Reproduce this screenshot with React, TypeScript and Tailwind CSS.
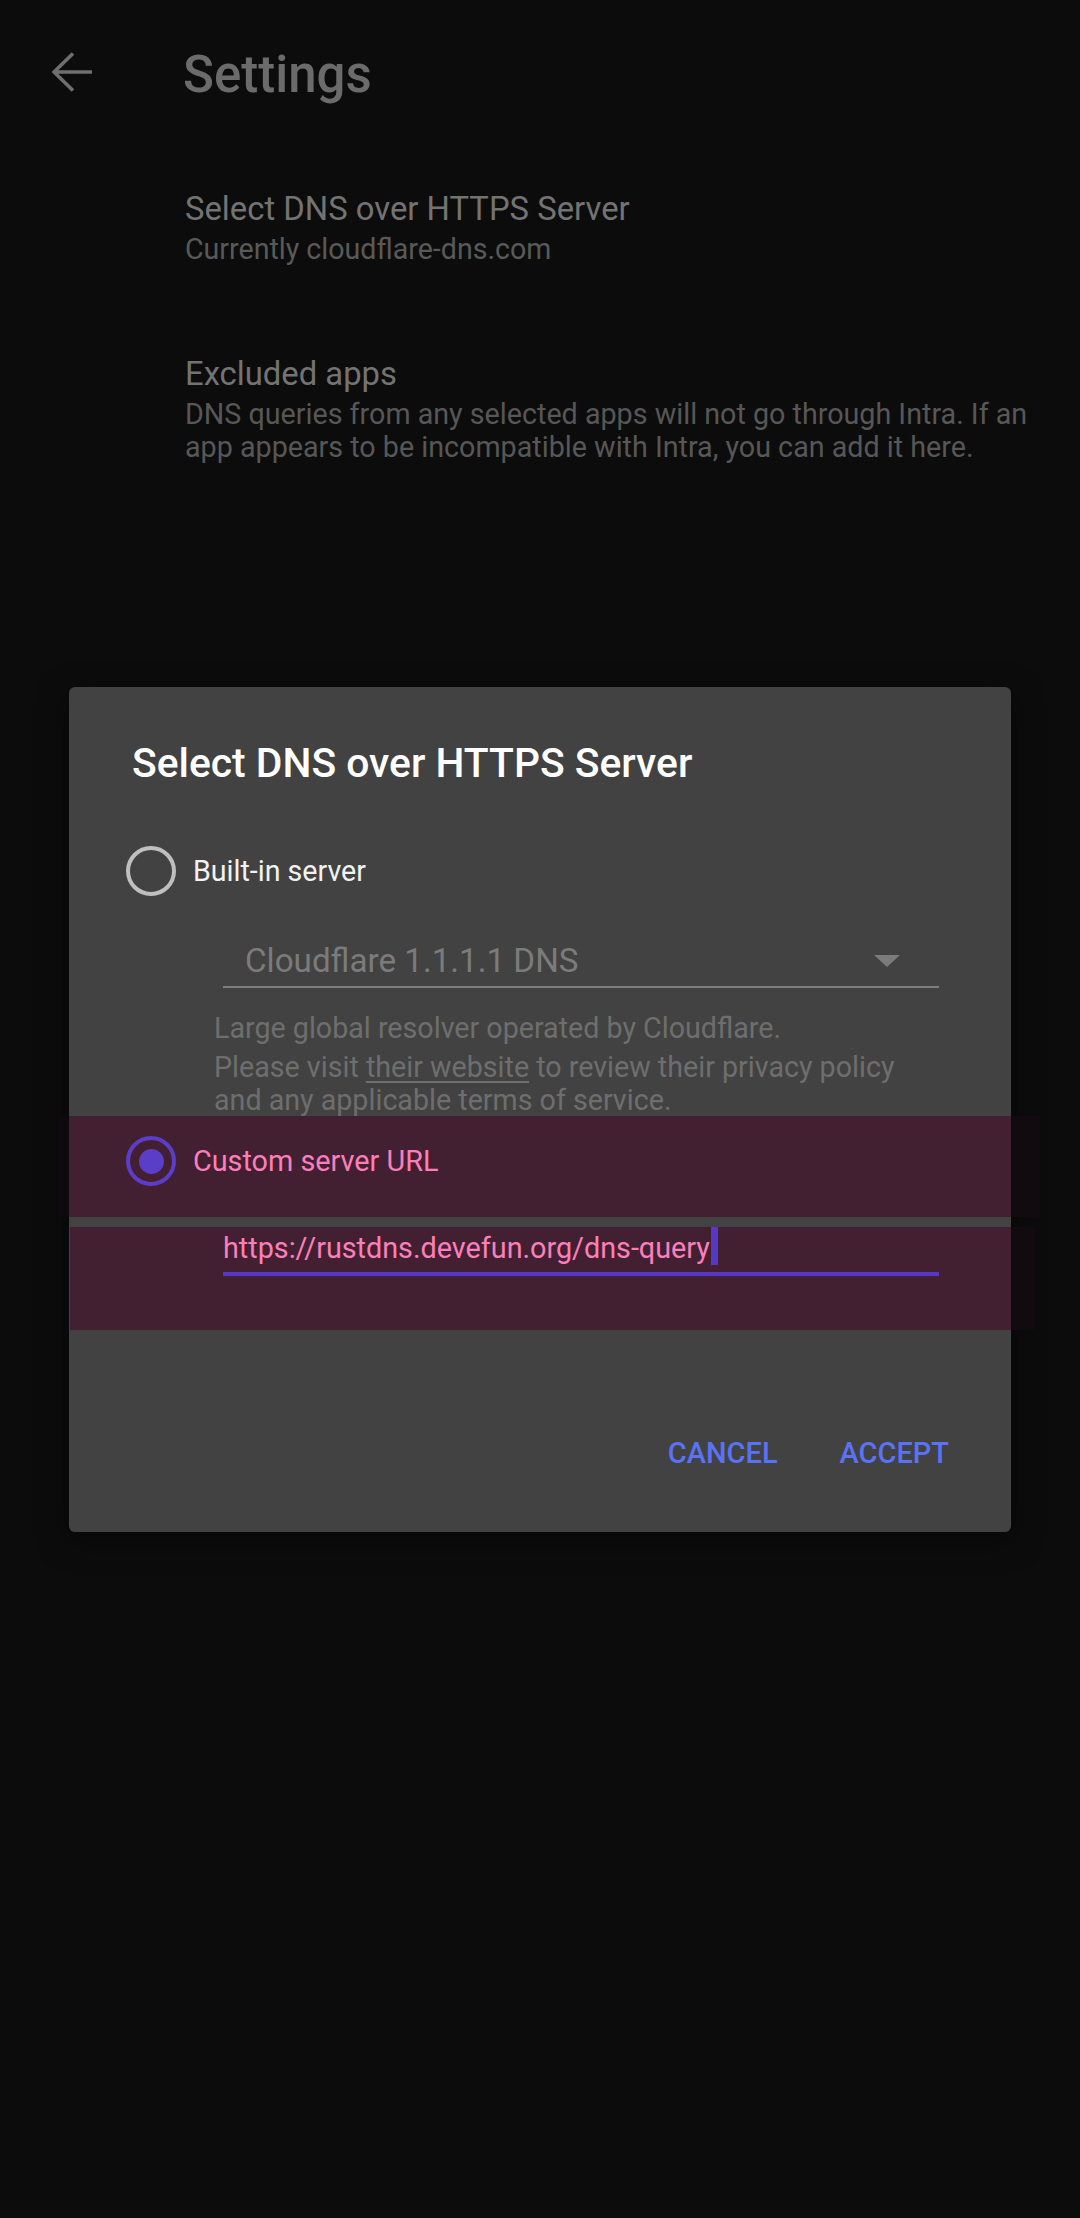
import React from "react";

function BackArrow() {
  return (
    <svg width="41" height="40" viewBox="0 0 41 40" fill="none">
      <path
        d="M2 20H40M21 1.5L2 20L21 38.5"
        stroke="#6f6f6f"
        strokeWidth="3.6"
        strokeLinejoin="miter"
      />
    </svg>
  );
}

function Radio({ checked }: { checked?: boolean }) {
  if (checked) {
    return (
      <div className="flex h-[50px] w-[50px] shrink-0 items-center justify-center rounded-full border-[4px] border-[#5a3ec8]">
        <div className="h-[25px] w-[25px] rounded-full bg-[#5a3ec8]" />
      </div>
    );
  }
  return (
    <div className="h-[50px] w-[50px] shrink-0 rounded-full border-[4px] border-[#bfbfbf]" />
  );
}

export default function App() {
  return (
    <div className="relative h-[2218px] w-[1080px] overflow-hidden bg-[#0c0c0c] font-['Roboto',sans-serif]">
      {/* toolbar (dimmed under the dialog) */}
      <header className="flex items-start pt-[45px]">
        <div className="ml-[52px] mt-[7px]">
          <BackArrow />
        </div>
        <h1 className="ml-[90px] text-[51px] font-medium leading-[60px] text-[#6b6b6b]">
          Settings
        </h1>
      </header>

      {/* settings list */}
      <div className="pl-[185px] pr-[30px]">
        <div className="mt-[84px]">
          <p className="text-[32.8px] leading-[40px] text-[#737373]">
            Select DNS over HTTPS Server
          </p>
          <p className="mt-[2px] text-[28.6px] leading-[36px] text-[#595959]">
            Currently cloudflare-dns.com
          </p>
        </div>
        <div className="mt-[87px]">
          <p className="text-[32.8px] leading-[40px] text-[#737373]">Excluded apps</p>
          <p className="mt-[4px] text-[28.7px] leading-[33px] text-[#575757]">
            <span className="block whitespace-nowrap">
              DNS queries from any selected apps will not go through Intra. If an
            </span>
            <span className="block whitespace-nowrap">
              app appears to be incompatible with Intra, you can add it here.
            </span>
          </p>
        </div>
      </div>

      {/* dialog */}
      <div className="absolute left-[69px] top-[687px] flex h-[845px] w-[942px] flex-col rounded-[6px] bg-[#424242] shadow-[0_8px_30px_rgba(0,0,0,0.5)]">
        {/* touch highlight bands */}
        <div className="absolute left-[-11px] top-[429px] z-[1] flex h-[101px] w-[982px]">
          <div className="w-[11px] bg-[#0e090c]" />
          <div className="w-[942px] bg-[#431f32]" />
          <div className="w-[29px] bg-[#110a0e]" />
        </div>
        <div className="absolute left-[1px] top-[540px] z-[1] flex h-[103px] w-[965px]">
          <div className="w-[941px] bg-[#431f32]" />
          <div className="w-[24px] bg-[#110a0e]" />
        </div>

        <h2 className="ml-[63px] mt-[52px] text-[40.8px] font-medium leading-[48px] text-white">
          Select DNS over HTTPS Server
        </h2>

        <div className="ml-[57px] mt-[59px] flex h-[50px] items-center">
          <Radio />
          <span className="ml-[17px] text-[28.6px] leading-[34px] text-[#f2f2f2]">
            Built-in server
          </span>
        </div>

        <div className="ml-[154px] mt-[45px] flex w-[716px] items-center border-b-2 border-[#7d7d7d] pb-[5px]">
          <span className="pl-[22px] text-[33.2px] leading-[40px] text-[#7b7b7b]">
            Cloudflare 1.1.1.1 DNS
          </span>
          <span className="ml-auto mr-[39px] h-0 w-0 border-l-[13px] border-r-[13px] border-t-[12px] border-l-transparent border-r-transparent border-t-[#7b7b7b]" />
        </div>

        <div className="ml-[145px] mt-[24px] text-[28.65px] leading-[33px] text-[#6e6e6e]">
          <p className="whitespace-nowrap">Large global resolver operated by Cloudflare.</p>
          <p className="mt-[6px]">
            <span className="block whitespace-nowrap">
              Please visit <span className="underline underline-offset-[4px]">their website</span> to review their privacy policy
            </span>
            <span className="block whitespace-nowrap">and any applicable terms of service.</span>
          </p>
        </div>

        <div className="relative z-[2] ml-[57px] mt-[19px] flex h-[50px] items-center">
          <Radio checked />
          <span className="ml-[17px] text-[28.8px] leading-[34px] text-[#fb7fba]">
            Custom server URL
          </span>
        </div>

        <div className="relative z-[2] ml-[154px] mt-[43px] w-[716px] border-b-[4px] border-[#5538c8] pb-[5px]">
          <div className="flex items-start">
            <span className="text-[28.75px] leading-[38px] text-[#fb7fba]">
              https://rustdns.devefun.org/dns-query
            </span>
            <span className="-mt-[2px] ml-[1px] h-[38px] w-[7px] bg-[#5538c8]" />
          </div>
        </div>

        <div className="mt-[159px] flex justify-end gap-[62px] pr-[62px]">
          <button className="text-[29px] font-medium leading-[36px] text-[#5a72f5]">
            CANCEL
          </button>
          <button className="text-[29px] font-medium leading-[36px] text-[#5a72f5]">
            ACCEPT
          </button>
        </div>
      </div>
    </div>
  );
}
